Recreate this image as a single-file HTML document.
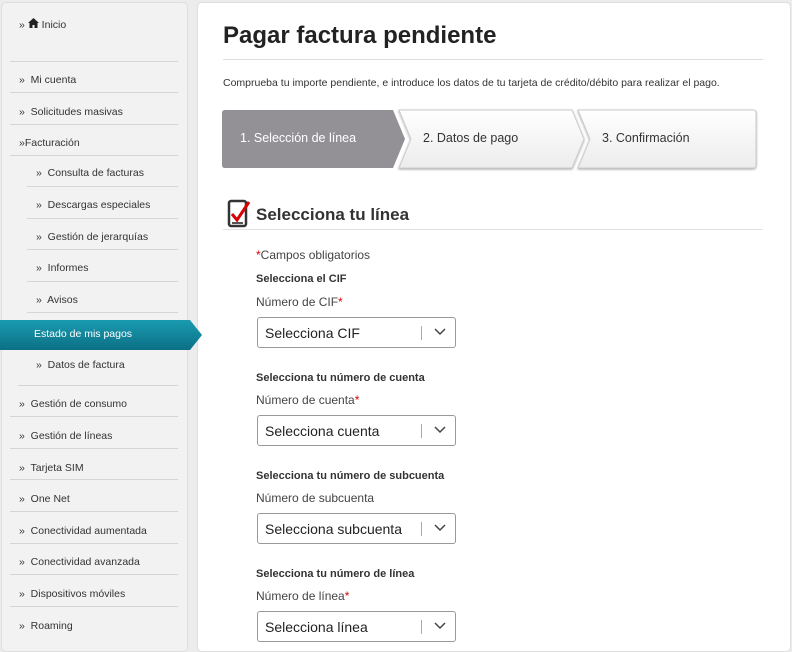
<!DOCTYPE html>
<html><head><meta charset="utf-8"><style>
*{margin:0;padding:0;box-sizing:border-box}
body{width:792px;height:640px;overflow:hidden;background:#ececec;font-family:"Liberation Sans",Arial,sans-serif;position:relative;color:#333}
.a{position:absolute;white-space:nowrap}
#side{position:absolute;left:1px;top:2px;width:187px;height:650px;background:#f2f2f2;border:1px solid #dedede;border-radius:5px}
#main{position:absolute;left:197px;top:2px;width:594px;height:650px;background:#fff;border:1px solid #dedede;border-radius:5px}
.si{position:absolute;font-size:10.5px;color:#333;white-space:nowrap}
.sep{position:absolute;height:1px;background:#d6d6d6}
.sel{position:absolute;left:257px;width:199px;height:31px;border:1px solid #999;border-radius:3px;background:#fff;font-size:14px;color:#222}
.sel span{position:absolute;left:7px;top:7px}
.sel i{position:absolute;left:163px;top:8px;width:1px;height:14px;background:#aaa}
.sel svg{position:absolute;left:176px;top:10px}
.lb{position:absolute;left:256px;font-size:12px;color:#444}
.bh{position:absolute;left:256px;font-size:11px;font-weight:bold;color:#333}
.r{color:#d00}
</style></head><body>
<div id="side"></div>
<div id="main"></div>

<div class="si" style="left:19px;top:18px">» <svg width="11" height="10" viewBox="0 0 11 10"><path d="M5.5 0L0 5h1.5v5h3V7h2v3h3V5H11z" fill="#222"/></svg> Inicio</div>
<div class="sep" style="left:10px;top:61px;width:168px"></div>
<div class="si" style="left:19px;top:74px">»&nbsp; Mi cuenta</div>
<div class="sep" style="left:10px;top:92px;width:168px"></div>
<div class="si" style="left:19px;top:106px">»&nbsp; Solicitudes masivas</div>
<div class="sep" style="left:10px;top:124px;width:168px"></div>
<div class="si" style="left:19px;top:137px">»Facturación</div>
<div class="sep" style="left:10px;top:155px;width:168px"></div>
<div class="si" style="left:36px;top:167px">»&nbsp; Consulta de facturas</div>
<div class="sep" style="left:27px;top:186px;width:151px"></div>
<div class="si" style="left:36px;top:199px">»&nbsp; Descargas especiales</div>
<div class="sep" style="left:27px;top:218px;width:151px"></div>
<div class="si" style="left:36px;top:231px">»&nbsp; Gestión de jerarquías</div>
<div class="sep" style="left:27px;top:249px;width:151px"></div>
<div class="si" style="left:36px;top:262px">»&nbsp; Informes</div>
<div class="sep" style="left:27px;top:281px;width:151px"></div>
<div class="si" style="left:36px;top:294px">»&nbsp; Avisos</div>
<div class="sep" style="left:27px;top:312px;width:151px"></div>
<svg class="a" style="left:0;top:320px" width="204" height="30"><defs><linearGradient id="g" x1="0" y1="0" x2="0" y2="1"><stop offset="0" stop-color="#1a9bb0"/><stop offset="1" stop-color="#0b7085"/></linearGradient></defs><path d="M0 0H190L202 15L190 30H0Z" fill="url(#g)"/></svg>
<div class="si" style="left:34px;top:328px;color:#fff">Estado de mis pagos</div>
<div class="si" style="left:36px;top:359px">»&nbsp; Datos de factura</div>
<div class="sep" style="left:18px;top:385px;width:160px"></div>
<div class="si" style="left:19px;top:398px">»&nbsp; Gestión de consumo</div>
<div class="sep" style="left:10px;top:416px;width:168px"></div>
<div class="si" style="left:19px;top:430px">»&nbsp; Gestión de líneas</div>
<div class="sep" style="left:10px;top:448px;width:168px"></div>
<div class="si" style="left:19px;top:462px">»&nbsp; Tarjeta SIM</div>
<div class="sep" style="left:10px;top:479px;width:168px"></div>
<div class="si" style="left:19px;top:493px">»&nbsp; One Net</div>
<div class="sep" style="left:10px;top:511px;width:168px"></div>
<div class="si" style="left:19px;top:525px">»&nbsp; Conectividad aumentada</div>
<div class="sep" style="left:10px;top:543px;width:168px"></div>
<div class="si" style="left:19px;top:556px">»&nbsp; Conectividad avanzada</div>
<div class="sep" style="left:10px;top:574px;width:168px"></div>
<div class="si" style="left:19px;top:588px">»&nbsp; Dispositivos móviles</div>
<div class="sep" style="left:10px;top:606px;width:168px"></div>
<div class="si" style="left:19px;top:620px">»&nbsp; Roaming</div>

<div class="a" style="left:223px;top:22px;font-size:24px;font-weight:bold;color:#222">Pagar factura pendiente</div>
<div class="a" style="left:223px;top:59px;width:540px;height:1px;background:#ddd"></div>
<div class="a" style="left:223px;top:77px;font-size:10.5px;color:#333">Comprueba tu importe pendiente, e introduce los datos de tu tarjeta de crédito/débito para realizar el pago.</div>

<svg class="a" style="left:220px;top:108px" width="540" height="64">
<defs><linearGradient id="w" x1="0" y1="0" x2="0" y2="1"><stop offset="0" stop-color="#fff"/><stop offset="1" stop-color="#ececec"/></linearGradient>
<filter id="sh"><feDropShadow dx="0" dy="1" stdDeviation="1" flood-color="#000" flood-opacity=".35"/></filter></defs>
<path d="M358 2H533Q536 2 536 5V57Q536 60 533 60H358L370 31Z" fill="url(#w)" stroke="#ccc" filter="url(#sh)"/>
<path d="M179 2H352L364 31L352 60H179L191 31Z" fill="url(#w)" stroke="#ccc" filter="url(#sh)"/>
<path d="M5 2H173L185 31L173 60H5Q2 60 2 57V5Q2 2 5 2Z" fill="#939196"/>
</svg>
<div class="a" style="left:240px;top:131px;font-size:12.5px;color:#fff">1. Selección de línea</div>
<div class="a" style="left:423px;top:131px;font-size:12.5px;color:#333">2. Datos de pago</div>
<div class="a" style="left:602px;top:131px;font-size:12.5px;color:#333">3. Confirmación</div>

<svg class="a" style="left:227px;top:199px" width="24" height="30"><rect x="2" y="2" width="17" height="25" rx="2" fill="none" stroke="#333" stroke-width="2.5"/><rect x="5" y="23" width="11" height="2" fill="#555"/><path d="M5 15L10 21L22 3" fill="none" stroke="#d80000" stroke-width="3"/></svg>
<div class="a" style="left:256px;top:205px;font-size:17px;font-weight:bold;color:#333">Selecciona tu línea</div>
<div class="a" style="left:223px;top:229px;width:540px;height:1px;background:#e2e2e2"></div>

<div class="lb" style="top:248px"><span class="r">*</span>Campos obligatorios</div>
<div class="bh" style="top:273px">Selecciona el CIF</div>
<div class="lb" style="top:295px">Número de CIF<span class="r">*</span></div>
<div class="sel" style="top:317px"><span>Selecciona CIF</span><i></i><svg width="12" height="8"><path d="M1 1L6 6L11 1" fill="none" stroke="#444" stroke-width="1.5"/></svg></div>

<div class="bh" style="top:372px">Selecciona tu número de cuenta</div>
<div class="lb" style="top:393px">Número de cuenta<span class="r">*</span></div>
<div class="sel" style="top:415px"><span>Selecciona cuenta</span><i></i><svg width="12" height="8"><path d="M1 1L6 6L11 1" fill="none" stroke="#444" stroke-width="1.5"/></svg></div>

<div class="bh" style="top:470px">Selecciona tu número de subcuenta</div>
<div class="lb" style="top:491px">Número de subcuenta</div>
<div class="sel" style="top:513px"><span>Selecciona subcuenta</span><i></i><svg width="12" height="8"><path d="M1 1L6 6L11 1" fill="none" stroke="#444" stroke-width="1.5"/></svg></div>

<div class="bh" style="top:568px">Selecciona tu número de línea</div>
<div class="lb" style="top:589px">Número de línea<span class="r">*</span></div>
<div class="sel" style="top:611px"><span>Selecciona línea</span><i></i><svg width="12" height="8"><path d="M1 1L6 6L11 1" fill="none" stroke="#444" stroke-width="1.5"/></svg></div>
</body></html>
